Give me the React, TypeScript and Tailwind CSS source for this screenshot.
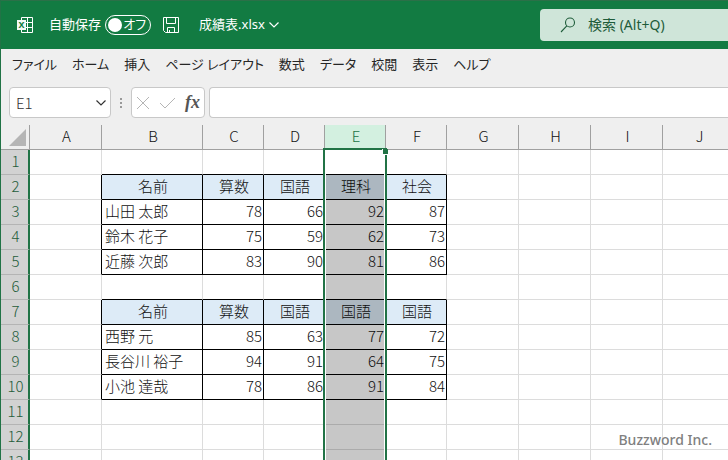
import React from 'react'
import clsx from 'clsx'

type Row = (string | number)[]

const tabs = ['ファイル', 'ホーム', '挿入', 'ページ レイアウト', '数式', 'データ', '校閲', '表示', 'ヘルプ']

const columns = 'ABCDEFGHIJ'.split('')
const rowNumbers = Array.from({ length: 13 }).map((_, i) => i + 1)

// cells B to F, by row number
const data: Record<number, Row> = {
  2: ['名前', '算数', '国語', '理科', '社会'],
  3: ['山田 太郎', 78, 66, 92, 87],
  4: ['鈴木 花子', 75, 59, 62, 73],
  5: ['近藤 次郎', 83, 90, 81, 86],
  7: ['名前', '算数', '国語', '国語', '国語'],
  8: ['西野 元', 85, 63, 77, 72],
  9: ['長谷川 裕子', 94, 91, 64, 75],
  10: ['小池 達哉', 78, 86, 91, 84]
}

const headerRows = [2, 7]
const selected = 'E'

function colWidth(col: string) {
  if (col === 'B') return 'min-w-[101px]'
  if ('CDEF'.includes(col)) return 'min-w-[61px]'
  return 'min-w-[72px]'
}

function ExcelIcon() {
  return (
    <svg width="16" height="16" viewBox="0 0 16 16" fill="none" stroke="#fff" aria-hidden="true">
      <path d="M4.5 3V.5h11v15h-11V13M10.500 .5v15M4.500 5.500h11M9 10.500h6.500" />
      <rect x="0" y="3" width="9" height="10" fill="#f4faf6" stroke="none" />
      <text x="4.5" y="11" textAnchor="middle" fontSize="9" fontWeight="700" fontFamily="Noto Sans" fill="#107c41" stroke="none">X</text>
    </svg>
  )
}

function SaveIcon() {
  return (
    <svg width="16" height="16" viewBox="0 0 16 16" fill="none" stroke="#fff" aria-hidden="true">
      <path d="M.5 .5h15v15H2.5l-2-2zM3.5 .5v6h9v-6M4.5 15.5v-5h7v5M6.5 13v2.5" />
    </svg>
  )
}

function Chevron() {
  return (
    <svg width="10" height="6" viewBox="0 0 10 6" fill="none" stroke="currentColor" strokeWidth="1.2" aria-hidden="true">
      <path d="M.5 .5 5 5 9.500 .5" />
    </svg>
  )
}

function TitleBar() {
  return (
    <header className="flex h-[49px] shrink-0 items-center border-t border-[#2b7048] bg-[#127b42] text-white">
      <div className="flex shrink-0 basis-[539px] items-center pl-4 text-[13px]">
        <ExcelIcon />
        <span id="autosave" className="ml-4">自動保存</span>
        <button role="switch" aria-checked="false" aria-labelledby="autosave" className="ml-1 flex h-5 w-[46px] items-center justify-between rounded-full border border-white pr-1 pl-0.5 text-[13px] [font-feature-settings:'palt']">
          <span className="size-3.5 rounded-full bg-white" />
          オフ
        </button>
        <button aria-label="保存" className="ml-3">
          <SaveIcon />
        </button>
        <button className="ml-5 flex items-center gap-1">
          成績表.xlsx
          <Chevron />
        </button>
      </div>
      <label className="flex h-8 min-w-0 flex-1 items-center rounded-l bg-[#cfe5d9] pl-5 text-[#1e5c3a]">
        <svg width="16" height="16" viewBox="0 0 16 16" fill="none" stroke="currentColor" strokeWidth="1.1" aria-hidden="true">
          <circle cx="10" cy="5.500" r="4.500" />
          <path d="M6.800 8.800 1 15" />
        </svg>
        <input aria-label="検索" placeholder="検索 (Alt+Q)" className="ml-3 min-w-0 flex-1 bg-transparent text-sm outline-none placeholder:text-[#1e5c3a]" />
      </label>
    </header>
  )
}

function FormulaBar() {
  return (
    <div className="flex h-[31px] shrink-0 pl-2 text-[#333]">
      <div className="flex w-[102px] items-center rounded border border-[#c8c8c8] bg-white pr-1">
        <input aria-label="名前ボックス" defaultValue="E1" className="min-w-0 flex-1 bg-transparent pt-0.5 pl-1.5 font-['Noto_Sans_CJK_JP',sans-serif] text-[15px] font-light outline-none" />
        <button aria-label="名前の一覧" className="flex">
          <Chevron />
        </button>
      </div>
      <div className="flex w-5 flex-col items-center justify-center gap-0.5">
        <span className="size-0.5 bg-[#999]" />
        <span className="size-0.5 bg-[#999]" />
        <span className="size-0.5 bg-[#999]" />
      </div>
      <div className="flex w-[74px] items-center justify-between rounded border border-[#c8c8c8] bg-white px-1">
        <button aria-label="キャンセル">
          <svg width="14" height="14" viewBox="0 0 14 14" fill="none" stroke="#b5b5b5">
            <path d="M1 1l12 12M13 1 1 13" />
          </svg>
        </button>
        <button aria-label="入力">
          <svg width="17" height="14" viewBox="0 0 17 14" fill="none" stroke="#b5b5b5">
            <path d="M1 7l5 5L16 2" />
          </svg>
        </button>
        <button aria-label="関数の挿入" className="pb-0.5 font-['Liberation_Serif',serif] text-lg leading-5 font-bold text-[#555] italic">
          fx
        </button>
      </div>
      <input aria-label="数式バー" className="ml-1 min-w-0 flex-1 rounded-l border border-r-0 border-[#c8c8c8] bg-white px-2 outline-none" />
    </div>
  )
}

function Selection() {
  return (
    <div className="pointer-events-none absolute -inset-x-0.5 -top-0.5 z-10 h-[1000px] border-2 border-b-0 border-[#217346]">
      <div className="h-full border-x border-white pt-[25px]">
        <div className="h-full bg-black/22" />
      </div>
      <span className="absolute -top-px -right-[3px] size-1.5 border-b border-l border-white bg-[#217346]" />
    </div>
  )
}

function Cell({ row, col }: { row: number; col: string }) {
  const index = 'BCDEF'.indexOf(col)
  const value = index >= 0 ? data[row]?.[index] : undefined
  const isHeader = headerRows.includes(row)
  const boxed = 'BCDEF'.includes(col)

  return (
    <td
      className={clsx(
        'border-r border-b pt-0 pr-px pb-0.5 pl-[3px] whitespace-nowrap',
        data[row] && (boxed || col === 'A') ? 'border-r-black' : 'border-r-[#dcdcdc]',
        boxed && (data[row] || data[row + 1]) ? 'border-b-black' : 'border-b-[#dcdcdc]',
        isHeader && boxed && 'bg-[#ddebf7] text-center',
        typeof value === 'number' && 'text-right',
        row === 1 && col === selected && 'relative'
      )}
    >
      {value}
      {row === 1 && col === selected && <Selection />}
    </td>
  )
}

function Sheet() {
  return (
    <div className="mt-[7px] min-h-0 flex-1 overflow-hidden bg-white">
      <table className="w-max border-separate border-spacing-0 font-['Noto_Sans_CJK_JP',sans-serif] text-[15px] leading-[22px] font-light text-[#111]">
        <thead>
          <tr className="h-[25px] bg-[#efefef]">
            <th className="min-w-[29px] border-r border-b border-[#a0a0a0] p-0">
              <svg width="17" height="17" viewBox="0 0 17 17" className="ml-2" aria-hidden="true">
                <path d="M17 0v17H0z" fill="#b5b5b5" />
              </svg>
            </th>
            {columns.map(c => (
              <th
                key={c}
                scope="col"
                className={clsx(
                  colWidth(c),
                  'border-r border-b border-[#a0a0a0] p-0 pb-0.5 pl-0.5 font-light',
                  c === selected && 'bg-[#d3f0e0] text-[#217346]'
                )}
              >
                {c}
              </th>
            ))}
          </tr>
        </thead>
        <tbody>
          {rowNumbers.map(n => (
            <tr key={n} className="h-[25px]">
              <th scope="row" className="border-r-2 border-b border-r-[#217346] border-b-[#b4b4b4] bg-[#d2d2d2] p-0 pb-0.5 pl-0.5 font-light text-[#1f5c3a]">
                {n}
              </th>
              {columns.map(c => <Cell key={c} row={n} col={c} />)}
            </tr>
          ))}
        </tbody>
      </table>
    </div>
  )
}

export default function App() {
  return (
    <div className="relative flex h-screen flex-col overflow-hidden border-l border-[#217346] bg-[#efefef] font-['Noto_Sans','Noto_Sans_CJK_JP',sans-serif]">
      <TitleBar />
      <nav className="flex h-[38px] shrink-0 items-center gap-[15px] pb-1.5 pl-[11px] text-[13px] whitespace-nowrap text-[#262626] [font-feature-settings:'palt']">
        {tabs.map(t => (
          <button key={t}>{t}</button>
        ))}
      </nav>
      <FormulaBar />
      <Sheet />
      <p className="absolute right-4 bottom-2.5 z-20 text-sm font-medium text-[#808080]">Buzzword Inc.</p>
    </div>
  )
}
